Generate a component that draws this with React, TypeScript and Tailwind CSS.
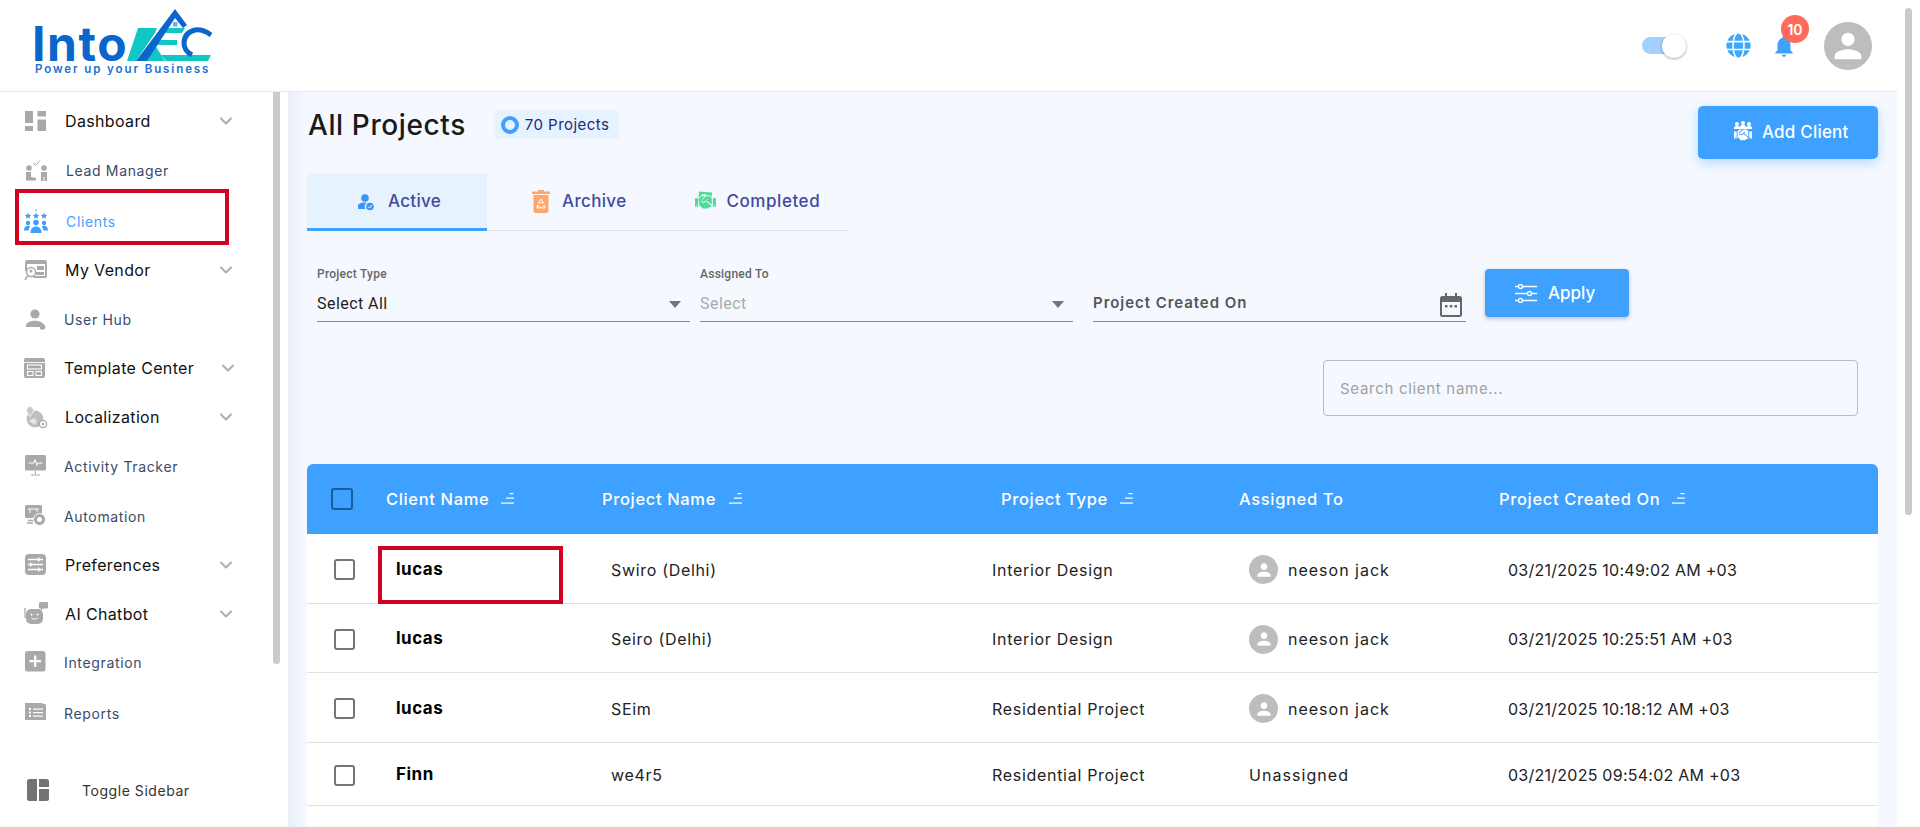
import React from "react";
import { FaGlobe, FaHandshake } from "react-icons/fa";
import { ChevronDown } from "lucide-react";

const G = "#a9a9a9";
const PERSON = "M12 12c2.21 0 4-1.79 4-4s-1.79-4-4-4-4 1.79-4 4 1.79 4 4 4zm0 2c-2.67 0-8 1.34-8 4v2h16v-2c0-2.66-5.33-4-8-4z";

const Svg = ({ children, s = 24, c = "" }: { children: React.ReactNode; s?: number; c?: string }) => (
  <svg width={s} height={s} viewBox="0 0 24 24" className={c}>{children}</svg>
);

const IDash = () => (
  <Svg><g fill={G}><rect x="1" y="2" width="8" height="12" /><rect x="13.5" y="2" width="8.5" height="5.500" /><rect x="1" y="17" width="8" height="5" /><rect x="13.5" y="10.5" width="8.5" height="11.5" /></g></Svg>
);
const ILead = () => (
  <Svg><g fill={G}><circle cx="5" cy="10" r="2.8" /><circle cx="20" cy="10" r="2.8" /><path d="M2 14h5v5l5 1v2.500H2zM17 14h6v9h-2.500v-4h-1v4H17z" /></g><path d="M9 5l2.500 2.500L16 2.500" fill="none" stroke={G} strokeWidth="1" /></Svg>
);
const IClients = () => (
  <Svg>
    <g fill="#3f9dfb">
      <path d="M4 3.500l1 2.200 2.300.2-1.800 1.500.6 2.300-2.100-1.200-2.100 1.200.6-2.300L.7 5.900 3 5.700zM12 3.500l1 2.200 2.300.2-1.800 1.500.6 2.300-2.100-1.200-2.100 1.200.6-2.300-1.800-1.500 2.300-.2zM20 3.500l1 2.200 2.300.2-1.800 1.500.6 2.300-2.100-1.200-2.100 1.200.6-2.300-1.800-1.500 2.300-.2z" />
      <rect x="11.600" y="0" width=".8" height="2.500" />
      <circle cx="12" cy="13.500" r="2.800" /><circle cx="4" cy="14" r="2.200" /><circle cx="20" cy="14" r="2.200" />
      <path d="M6.500 24c0-4 2.300-6.500 5.500-6.500s5.500 2.500 5.500 6.500zM0 21.500c0-3 1.500-4.800 4-4.800.9 0 1.700.3 2.300.8-1 1-1.500 2.300-1.700 4zM24 21.500c0-3-1.500-4.800-4-4.800-.9 0-1.700.3-2.300.8 1 1 1.500 2.300 1.700 4z" />
    </g>
  </Svg>
);
const IVendor = () => (
  <Svg>
    <path fillRule="evenodd" fill={G} d="M3 2h18a2 2 0 012 2v14a2 2 0 01-2 2H9l1-2h11V6H3v7H1V4a2 2 0 012-2z" />
    <g fill={G}><rect x="13" y="8" width="7" height="4" /><rect x="12" y="14" width="8" height="3" /></g>
    <circle cx="7" cy="14" r="4.500" fill="none" stroke={G} strokeWidth="1.500" /><circle cx="7" cy="13" r="1.500" fill={G} />
    <path d="M3.500 18L1 22" stroke={G} strokeWidth="1.500" />
  </Svg>
);
const IUser = () => (
  <Svg><g fill={G}><circle cx="11" cy="7" r="4.600" /><path d="M2 20v-1.500c0-3 5-4.700 9-4.700s8 1.700 9 4.300l-3 .2-1.500 1.700z" /><circle cx="18.500" cy="20" r="2.800" /></g></Svg>
);
const ITemplate = () => (
  <Svg>
    <rect x="1" y="2" width="21" height="20" rx="2" fill={G} />
    <path d="M1 6.500h21" stroke="#fff" strokeWidth=".9" />
    <g fill="none" stroke="#fff" strokeWidth="1.100"><rect x="4.500" y="9" width="14" height="4" /><rect x="4.500" y="15.500" width="5.500" height="4" /><rect x="13" y="15.500" width="5.500" height="4" /></g>
  </Svg>
);
const ILocal = () => (
  <Svg>
    <circle cx="11" cy="14" r="8.500" fill={G} opacity=".75" />
    <path d="M6 1.500a3.500 3.500 0 013.500 3.500c0 2.500-3.500 6.500-3.500 6.500S2.500 7.500 2.500 5A3.500 3.500 0 016 1.500z" fill="#c8c8c8" stroke="#fff" strokeWidth=".8" />
    <circle cx="19" cy="19" r="3.600" fill="#fff" stroke={G} strokeWidth="1.300" /><circle cx="19" cy="19" r="1.300" fill={G} />
    <path d="M5 16l5-3 3 3-2 4z" fill="#fff" opacity=".6" />
  </Svg>
);
const IActivity = () => (
  <Svg>
    <rect x="1" y="1" width="21" height="15.500" rx="1.500" fill={G} />
    <path d="M4.500 9h5l1.500-3 2 5 1.300-2H18.500" fill="none" stroke="#fff" strokeWidth="1.100" />
    <path d="M11.500 17v3M7 21h9" stroke={G} strokeWidth="1" />
  </Svg>
);
const IAuto = () => (
  <Svg>
    <rect x="1" y="1" width="17" height="13" rx="1.500" fill={G} />
    <path d="M4 5h11M6 5v4M13 5v3" stroke="#fff" strokeWidth="1" fill="none" />
    <path d="M4 16.500h7M3 19h6" stroke={G} strokeWidth="1.500" />
    <circle cx="15.500" cy="15.500" r="6" fill={G} stroke="#fff" strokeWidth="1" /><circle cx="15.500" cy="15.500" r="2.500" fill="#fff" />
  </Svg>
);
const IPref = () => (
  <Svg>
    <rect x="1" y="1" width="21" height="21" rx="4" fill={G} />
    <g stroke="#fff" strokeWidth="1.400"><path d="M4 6.500h15M4 11.500h15M4 16.500h15" /></g>
    <g fill="#fff"><path d="M14 4l3 2.500-3 2.500zM6 9l3 2.500-3 2.500zM14 14l3 2.500-3 2.500z" /></g>
  </Svg>
);
const IBot = () => (
  <Svg>
    <rect x="15" y="0" width="9" height="6.500" rx="1.200" fill={G} />
    <path d="M17 6l0 2.500 2.500-2.500z" fill={G} />
    <rect x="2" y="7" width="17" height="15" rx="5" fill={G} />
    <circle cx="1" cy="7" r="1" fill={G} />
    <rect x=".4" y="8" width="1.200" height="8" fill={G} />
    <g fill="#fff"><circle cx="7.500" cy="12.500" r="1" /><circle cx="13.500" cy="12.500" r="1" /></g>
    <path d="M7.500 16c1.500 1.500 4.500 1.500 6 0" stroke="#fff" fill="none" strokeWidth="1" />
  </Svg>
);
const IInteg = () => (
  <Svg>
    <rect x="1" y="1" width="20.500" height="20.500" rx="2.500" fill={G} />
    <path d="M5.500 11.200h11.500M11.200 5.500v11.500" stroke="#fff" strokeWidth="2.200" />
  </Svg>
);
const IReports = () => (
  <Svg>
    <path d="M1 2h16l5 1.500V19H1z" fill={G} />
    <g fill="#fff"><rect x="5" y="7" width="2" height="2" /><rect x="5" y="10.500" width="2" height="2" /><rect x="5" y="14" width="2" height="2" /><rect x="9" y="7.500" width="10" height="1.200" /><rect x="9" y="11" width="10" height="1.200" /><rect x="9" y="14.500" width="10" height="1.200" /></g>
  </Svg>
);
const IToggle = () => (
  <svg width="22" height="22" viewBox="0 0 22 22">
    <g fill="#737373"><path d="M2.500 0H10v22H2.500A2.500 2.500 0 010 19.500v-17A2.500 2.500 0 012.500 0z" /><path d="M12 0h7.500A2.500 2.500 0 0122 2.500V8H12z" /><path d="M12 10h10v9.500a2.500 2.500 0 01-2.500 2.500H12z" /></g>
  </svg>
);

type Item = {
  label: string; icon: React.ReactNode; parent?: boolean; mt: string; tx: string; track: string; active?: boolean; chev?: string; pl?: string;
};
const items: Item[] = [
  { label: "Dashboard", icon: <IDash />, parent: true, mt: "mt-0", tx: "ml-[17px]", track: "tracking-[0.35px]" },
  { label: "Lead Manager", icon: <ILead />, mt: "mt-[1px]", tx: "ml-[18px]", track: "tracking-[0.65px]" },
  { label: "Clients", icon: <IClients />, mt: "mt-[3px]", tx: "ml-[18px]", track: "tracking-[0.65px]", active: true },
  { label: "My Vendor", icon: <IVendor />, parent: true, mt: "mt-[1px]", tx: "ml-[17px]", track: "tracking-[0.35px]" },
  { label: "User Hub", icon: <IUser />, mt: "mt-[1px]", tx: "ml-[16px]", track: "tracking-[0.65px]" },
  { label: "Template Center", icon: <ITemplate />, parent: true, mt: "mt-[1px]", tx: "ml-[17px]", track: "tracking-[0.35px]", chev: "mr-[35px]", pl: "-ml-px" },
  { label: "Localization", icon: <ILocal />, parent: true, mt: "mt-[1px]", tx: "ml-[17px]", track: "tracking-[0.35px]" },
  { label: "Activity Tracker", icon: <IActivity />, mt: "mt-[1px]", tx: "ml-[16px]", track: "tracking-[0.65px]" },
  { label: "Automation", icon: <IAuto />, mt: "mt-[2px]", tx: "ml-[16px]", track: "tracking-[0.65px]" },
  { label: "Preferences", icon: <IPref />, parent: true, mt: "mt-[1px]", tx: "ml-[17px]", track: "tracking-[0.35px]" },
  { label: "AI Chatbot", icon: <IBot />, parent: true, mt: "mt-[1px]", tx: "ml-[17px]", track: "tracking-[0.35px]" },
  { label: "Integration", icon: <IInteg />, mt: "mt-0", tx: "ml-[16px]", track: "tracking-[0.65px]" },
  { label: "Reports", icon: <IReports />, mt: "mt-[3px]", tx: "ml-[16px]", track: "tracking-[0.65px]" },
];

const Sort = () => (
  <svg width="14" height="12" viewBox="0 0 14 12" className="shrink-0" fill="#fff">
    <rect x="8.500" y="0" width="4" height="1.200" /><rect x="5" y="4.500" width="8" height="1.200" /><rect x="0" y="9.500" width="13" height="1.200" />
  </svg>
);

const Caret = () => (
  <svg width="12" height="7" viewBox="0 0 12 7" className="shrink-0"><path d="M0 0h12L6 7z" fill="#757575" /></svg>
);

const Check = () => <div className="w-[21px] h-[21px] rounded-[3px] border-[2px] border-[#757575] bg-white shrink-0" />;

const rows = [
  { name: "lucas", project: "Swiro (Delhi)", type: "Interior Design", who: "neeson jack", date: "03/21/2025 10:49:02 AM +03", h: "h-[70px]", mark: true },
  { name: "lucas", project: "Seiro (Delhi)", type: "Interior Design", who: "neeson jack", date: "03/21/2025 10:25:51 AM +03", h: "h-[69px]" },
  { name: "lucas", project: "SEim", type: "Residential Project", who: "neeson jack", date: "03/21/2025 10:18:12 AM +03", h: "h-[70px]" },
  { name: "Finn", project: "we4r5", type: "Residential Project", who: "Unassigned", date: "03/21/2025 09:54:02 AM +03", h: "h-[63px]" },
];

export default function App() {
  return (
    <div className="w-full h-[827px] overflow-hidden flex bg-white font-[Inter,sans-serif] text-[#111]">
      <div className="w-[1897px] h-full flex flex-col shrink-0">
        {/* header */}
        <header className="h-[92px] border-b border-[#e6e9ee] flex items-start shrink-0">
          <div className="ml-[34px] mt-[9px] w-[180px] flex flex-col">
            <div className="flex items-end h-[53px]">
              <span className="text-[48px] leading-[36px] h-[36px] w-[93px] -ml-[2px] shrink-0 font-bold text-[#0b66cc] tracking-[1.6px]">Into</span>
              <svg width="85" height="53" viewBox="0 0 85 53" className="shrink-0 ml-[2px]">
                <path d="M0 52L11 19h19l-2 5L9 52z" fill="#10c7c6" />
                <path d="M20 52l8-16 10 16z" fill="#10c7c6" />
                <path d="M40 19h18l-3 5H36zM33 31h17v5H30zM34 46h50l-3 6H39z" fill="#10c7c6" />
                <path d="M9 52L48 0l12 16-4 3-8-10-28 43z" fill="#0b66cc" />
                <rect x="46" y="13" width="4.500" height="4.500" fill="#6fb0e8" />
                <path d="M84 26Q76 20 68 21Q57 24 57 34Q57 42 65 46" fill="none" stroke="#0b66cc" strokeWidth="5" />
              </svg>
            </div>
            <span className="text-[11.500px] leading-[12px] mt-[1px] ml-[1px] font-semibold whitespace-nowrap text-[#1a71cf] tracking-[1.9px]">Power up your Business</span>
          </div>
          <div className="ml-auto flex items-start h-full relative">
            <div className="mt-[34px] w-[44px] h-[24px] relative">
              <div className="absolute left-0 top-[3px] w-[42px] h-[17px] rounded-full bg-[#a3d0ff]" />
              <div className="absolute left-[20px] top-0 w-[24px] h-[24px] rounded-full bg-white shadow-[0_1px_3px_rgba(0,0,0,0.35)]" />
            </div>
            <FaGlobe className="mt-[33px] ml-[40px] text-[25px] text-[#3ea8f8]" />
            <div className="relative ml-[20px] mt-[33px] w-[26px] h-[26px]">
              <svg width="26" height="26" viewBox="0 0 24 24" fill="#3ea4fb"><path d="M12 22c1.100 0 2-.9 2-2h-4c0 1.100.89 2 2 2zm6-6v-5c0-3.070-1.640-5.640-4.500-6.320V4c0-.83-.67-1.500-1.500-1.500s-1.500.67-1.500 1.500v.68C7.630 5.360 6 7.920 6 11v5l-2 2v1h16v-1l-2-2z" /></svg>
              <div className="absolute left-[10px] -top-[18px] w-[28px] h-[28px] rounded-full bg-[#ff6a5b] text-white text-[14px] font-semibold flex items-center justify-center">10</div>
            </div>
            <div className="ml-[27px] mr-[25px] mt-[22px] w-[48px] h-[48px] rounded-full bg-[#bdbdbd] flex items-center justify-center">
              <svg width="40" height="40" viewBox="0 0 24 24" fill="#fff"><path d={PERSON} /></svg>
            </div>
          </div>
        </header>

        <div className="flex-1 flex min-h-0">
          {/* sidebar */}
          <aside className="w-[288px] shrink-0 flex bg-white">
            <nav className="w-[273px] shrink-0 pt-[5px] flex flex-col">
              {items.map((it) => (
                <div key={it.label} className={`relative h-[48px] flex items-center pl-[24px] shrink-0 ${it.mt}`}>
                  <span className={`w-[24px] h-[24px] shrink-0 ${it.pl ?? ""}`}>{it.icon}</span>
                  <span className={`${it.tx} ${it.track} whitespace-nowrap ${it.parent ? "text-[16px] text-[#111]" : it.active ? "text-[14px] text-[#4a9dff]" : "text-[14px] text-[#3a4a6b]"}`}>{it.label}</span>
                  {it.parent && <ChevronDown size={20} strokeWidth={2.500} className={`ml-auto ${it.chev ?? "mr-[37px]"} text-[#aeaeae]`} />}
                  {it.active && <div className="absolute left-[15px] -top-[8px] w-[214px] h-[56px] border-[4px] border-[#d0021f]" />}
                </div>
              ))}
              <div className="flex items-center pl-[27px] mt-[29px] h-[48px]">
                <IToggle />
                <span className="ml-[33px] text-[14px] text-[#333] tracking-[0.55px]">Toggle Sidebar</span>
              </div>
            </nav>
            <div className="w-[7px] h-[572px] bg-[#cacaca] rounded-b-[4px]" />
          </aside>

          {/* main */}
          <main className="flex-1 min-w-0 pl-[19px] pr-[19px] flex flex-col bg-[linear-gradient(90deg,#e8eef8,#f5f9ff_18px)]">
            <div className="h-[81px] flex items-start justify-between shrink-0">
              <div className="mt-[18px] h-[29px] flex items-center pl-[1px]">
                <h1 className="text-[28px] font-medium text-[#1a1a1a] tracking-[0.6px] whitespace-nowrap">All Projects</h1>
                <div className="ml-[28px] w-[125px] h-[29px] rounded-[4px] bg-[#e6f2fe] flex items-center pl-[7px]">
                  <span className="w-[18px] h-[18px] rounded-full border-[4px] border-[#3ea1ff] shrink-0" />
                  <span className="ml-[6px] pt-[1px] text-[15px] text-[#1b2a7b] tracking-[0.45px] whitespace-nowrap">70 Projects</span>
                </div>
              </div>
              <button className="mt-[14px] w-[180px] h-[53px] rounded-[5px] bg-[#3ea1ff] text-white flex items-center pl-[36px] shadow-[0_4px_12px_rgba(62,161,255,0.35)]">
                <span className="relative w-[18px] h-[18px] flex items-end justify-center">
                  <FaHandshake className="text-[18px] -mb-[2px]" />
                  <span className="absolute -top-[2px] left-[1px] w-[4px] h-[4px] rounded-full bg-white" />
                  <span className="absolute -top-[3px] left-[7px] w-[4px] h-[4px] rounded-full bg-white" />
                  <span className="absolute -top-[2px] left-[13px] w-[4px] h-[4px] rounded-full bg-white" />
                  <span className="absolute top-[2px] left-0 w-[6px] h-[3px] rounded-t-[2px] bg-white" />
                  <span className="absolute top-[1px] left-[6px] w-[6px] h-[4px] rounded-t-[2px] bg-white" />
                  <span className="absolute top-[2px] left-[12px] w-[6px] h-[3px] rounded-t-[2px] bg-white" />
                </span>
                <span className="ml-[10px] text-[17px] font-medium tracking-[0.2px]">Add Client</span>
              </button>
            </div>

            {/* tabs */}
            <div className="w-[540px] h-[58px] border-b border-[#dbe1e8] flex items-stretch shrink-0">
              <div className="w-[180px] h-[58px] bg-[#e6f2fe] border-b-[3px] border-[#3ea1ff] flex items-center pl-[51px] pt-[3px] shrink-0">
                <svg width="16" height="17" viewBox="0 0 16 17" className="shrink-0"><g fill="#3a96f5"><circle cx="7" cy="4" r="3.800" /><path d="M0 15v-3c0-2 3-3.500 6.500-3.500.7 0 1.300 0 2 .2A5 5 0 007.500 15z" /><circle cx="12" cy="12.500" r="3.800" /></g><path d="M10 12.500l1.500 1.500 2.500-3" stroke="#fff" strokeWidth="1" fill="none" /></svg>
                <span className="ml-[14px] text-[17px] font-medium text-[#3f4b9d] tracking-[0.3px]">Active</span>
              </div>
              <div className="ml-[45px] flex items-center shrink-0">
                <svg width="18" height="23" viewBox="0 0 18 23"><g fill="#ffa66b"><rect x="0" y="1.500" width="18" height="2.500" rx=".5" /><rect x="6" y="0" width="6" height="2" /><path d="M1.500 5h15v16a2 2 0 01-2 2h-11a2 2 0 01-2-2z" /></g><path d="M9 9l2.500 4H6.500zM5.500 15l3.500 3h-4zM12.500 15l.5 3H9.500z" fill="none" stroke="#fff" strokeWidth="1" /></svg>
                <span className="ml-[12px] text-[17px] font-medium text-[#3f4b9d] tracking-[0.35px]">Archive</span>
              </div>
              <div className="ml-[68px] flex items-center shrink-0">
                <span className="relative w-[21px] h-[22px] shrink-0">
                  <svg width="21" height="12" viewBox="0 0 21 12" className="absolute left-0 top-0"><path d="M4 0.500L17 1.500 16.500 11 3.500 10z" fill="#4fd99a" /><rect x="7" y="3" width="4" height="3" fill="#d6f7e6" /></svg>
                  <FaHandshake className="absolute left-0 bottom-0 text-[21px] text-[#4fd99a] [filter:drop-shadow(0_-1px_0_#f5f9ff)]" />
                </span>
                <span className="ml-[11px] text-[17px] font-medium text-[#3f4b9d] tracking-[0.55px]">Completed</span>
              </div>
            </div>

            {/* filters */}
            <div className="ml-[10px] mt-[35px] flex items-start shrink-0">
              <div className="w-[373px] shrink-0 font-[Roboto,sans-serif]">
                <div className="h-[16px] leading-[16px] text-[12px] font-medium text-[#666] tracking-[0.25px]">Project Type</div>
                <div className="h-[40px] border-b-[1px] border-[#8a8a8a] flex items-center justify-between pr-[9px] pt-[5px]">
                  <span className="text-[16px] text-[#222] tracking-[0.45px]">Select All</span>
                  <span><Caret /></span>
                </div>
              </div>
              <div className="ml-[10px] w-[373px] shrink-0 font-[Roboto,sans-serif]">
                <div className="h-[16px] leading-[16px] text-[12px] font-medium text-[#666] tracking-[0.25px]">Assigned To</div>
                <div className="h-[40px] border-b-[1px] border-[#8a8a8a] flex items-center justify-between pr-[9px] pt-[5px]">
                  <span className="text-[16px] text-[#aaa] tracking-[0.45px]">Select</span>
                  <span><Caret /></span>
                </div>
              </div>
              <div className="ml-[20px] w-[373px] shrink-0">
                <div className="h-[56px] border-b-[1px] border-[#8a8a8a] flex items-center justify-between pr-[4px] pt-[20px]">
                  <span className="text-[15px] font-semibold text-[#555] tracking-[0.95px]">Project Created On</span>
                  <svg width="22" height="24" viewBox="0 0 22 24" className="mt-[2px]"><path d="M5 0h2v3h8V0h2v3h2.500A2.500 2.500 0 0122 5.500v16a2.500 2.500 0 01-2.500 2.500h-17A2.500 2.500 0 010 21.500v-16A2.500 2.500 0 012.500 3H5z" fill="#666" /><rect x="2" y="9" width="18" height="13" fill="#f5f9ff" /><g fill="#666"><rect x="5" y="12" width="2.500" height="2.500" /><rect x="9.800" y="12" width="2.500" height="2.500" /><rect x="14.500" y="12" width="2.500" height="2.500" /></g></svg>
                </div>
              </div>
              <button className="ml-[19px] mt-[3px] w-[144px] h-[48px] rounded-[4px] bg-[#3ea1ff] text-white flex items-center pl-[30px] pt-[1px] shadow-[0_2px_4px_rgba(0,0,0,0.22)] shrink-0">
                <svg width="22" height="19" viewBox="0 0 22 19" fill="none" stroke="#fff" strokeWidth="1.300"><path d="M0 2.500h3M8 2.500h14M0 9.500h12M17 9.500h5M0 16.500h3M8 16.500h14" /><circle cx="5.500" cy="2.500" r="2" /><circle cx="14.500" cy="9.500" r="2" /><circle cx="5.500" cy="16.500" r="2" /></svg>
                <span className="ml-[11px] text-[17px] font-medium">Apply</span>
              </button>
            </div>

            {/* search */}
            <div className="mt-[38px] mr-[20px] self-end w-[535px] h-[56px] border border-[#bdbdbd] rounded-[4px] flex items-center pl-[16px] pt-[2px] shrink-0">
              <span className="text-[15px] text-[#a0a0a0] tracking-[0.7px]">Search client name...</span>
            </div>

            {/* table */}
            <div className="mt-[48px] shrink-0 bg-white">
              <div className="h-[70px] rounded-t-[6px] bg-[#3ea1ff] text-white text-[16.500px] font-medium grid grid-cols-[79px_216px_399px_238px_260px_1fr] items-center tracking-[0.65px]">
                <div className="pl-[24px]"><div className="w-[22px] h-[22px] rounded-[3px] border-[2px] border-[#1a5d99]" /></div>
                <div className="flex items-center gap-[12px]"><span>Client Name</span><Sort /></div>
                <div className="flex items-center gap-[13px]"><span>Project Name</span><Sort /></div>
                <div className="flex items-center gap-[12px]"><span>Project Type</span><Sort /></div>
                <div><span>Assigned To</span></div>
                <div className="flex items-center gap-[12px] whitespace-nowrap"><span>Project Created On</span><Sort /></div>
              </div>
              {rows.map((r, i) => (
                <div key={i} className={`${r.h} border-b border-[#e2e2e2] pt-[2px] grid grid-cols-[89px_215px_381px_257px_259px_1fr] items-center text-[16px] text-[#222]`}>
                  <div className="pl-[27px]"><Check /></div>
                  <div className="relative h-full flex items-center">
                    <span className="text-[17px] font-bold text-black tracking-[0.5px]">{r.name}</span>
                    {r.mark && <div className="absolute -left-[18px] top-[10px] w-[185px] h-[58px] border-[4px] border-[#d0021f]" />}
                  </div>
                  <div className="tracking-[0.68px]">{r.project}</div>
                  <div className="tracking-[0.7px]">{r.type}</div>
                  {r.who === "Unassigned" ? (
                    <div className="tracking-[1.05px]"><span>{r.who}</span></div>
                  ) : (
                    <div className="flex items-center">
                      <span className="w-[29px] h-[29px] rounded-full bg-[#bdbdbd] flex items-center justify-center shrink-0">
                        <svg width="20" height="20" viewBox="0 0 24 24" fill="#fff"><path d={PERSON} /></svg>
                      </span>
                      <span className="ml-[10px] tracking-[1px]">{r.who}</span>
                    </div>
                  )}
                  <div className="tracking-[0.25px] whitespace-nowrap">{r.date}</div>
                </div>
              ))}
              <div className="h-[60px] pl-[27px] pt-[21px]"><Check /></div>
            </div>
          </main>
        </div>
      </div>
      <div className="flex-1 pl-[8px] pt-[8px]">
        <div className="w-[7px] h-[507px] rounded-[4px] bg-[#cacaca]" />
      </div>
    </div>
  );
}
